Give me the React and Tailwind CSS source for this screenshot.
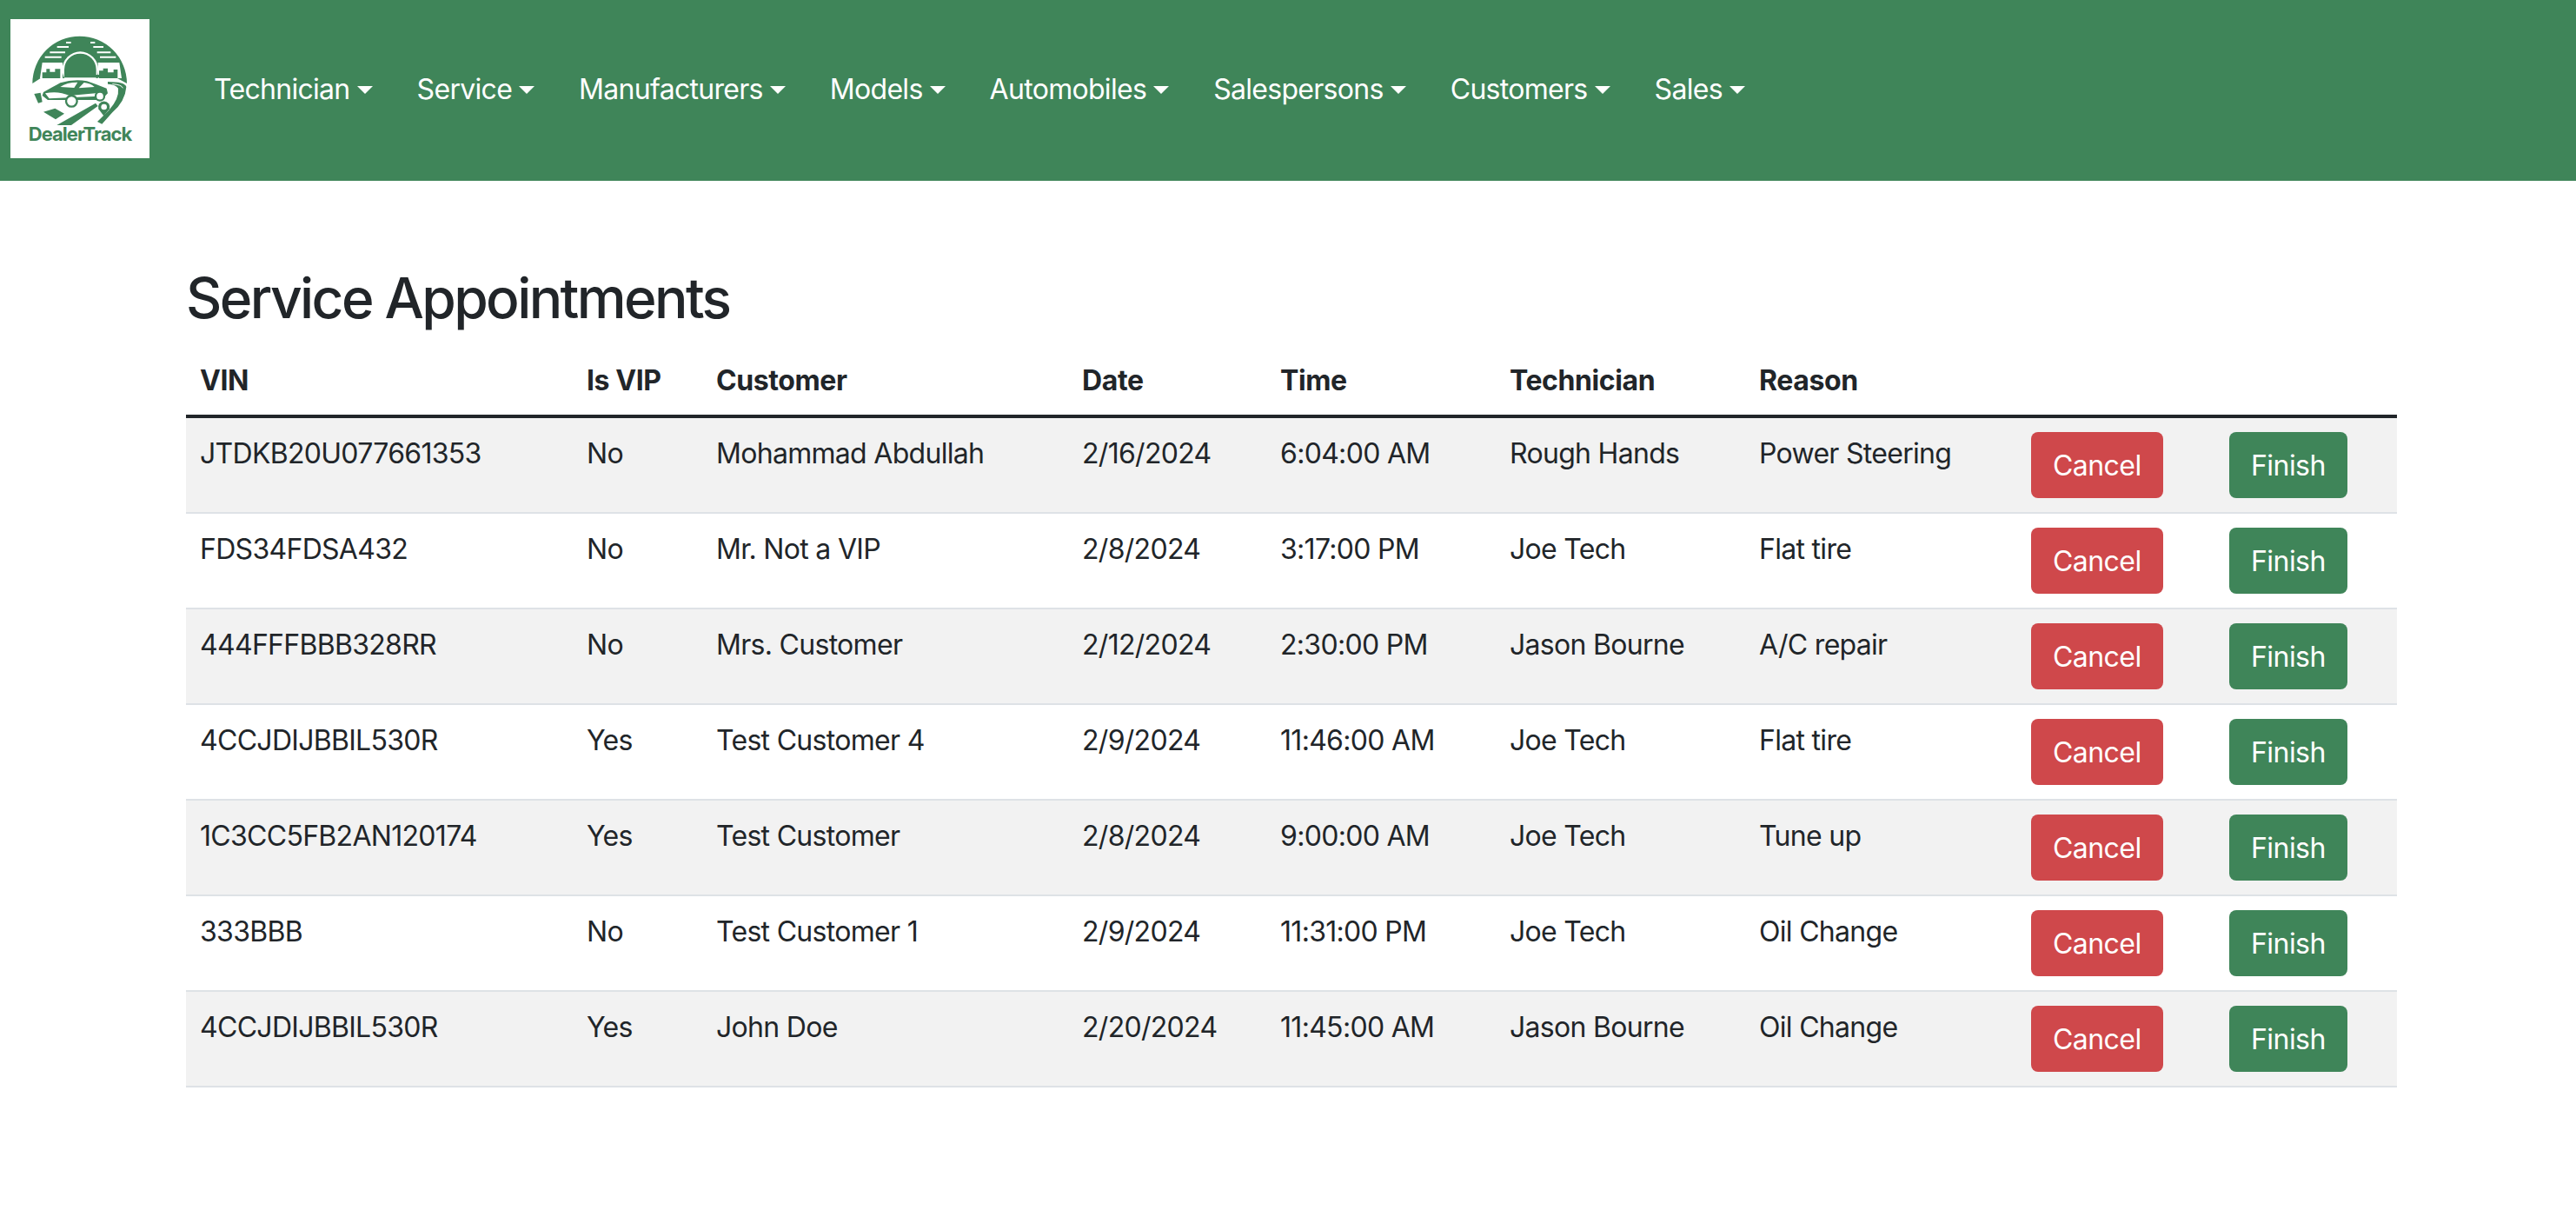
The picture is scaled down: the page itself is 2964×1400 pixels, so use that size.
const GREEN = "#3f8559";

const navItems = ["Technician", "Service", "Manufacturers", "Models", "Automobiles", "Salespersons", "Customers", "Sales"];

const appointments = [
  { vin: "JTDKB20U077661353", vip: "No", customer: "Mohammad Abdullah", date: "2/16/2024", time: "6:04:00 AM", technician: "Rough Hands", reason: "Power Steering" },
  { vin: "FDS34FDSA432", vip: "No", customer: "Mr. Not a VIP", date: "2/8/2024", time: "3:17:00 PM", technician: "Joe Tech", reason: "Flat tire" },
  { vin: "444FFFBBB328RR", vip: "No", customer: "Mrs. Customer", date: "2/12/2024", time: "2:30:00 PM", technician: "Jason Bourne", reason: "A/C repair" },
  { vin: "4CCJDIJBBIL530R", vip: "Yes", customer: "Test Customer 4", date: "2/9/2024", time: "11:46:00 AM", technician: "Joe Tech", reason: "Flat tire" },
  { vin: "1C3CC5FB2AN120174", vip: "Yes", customer: "Test Customer", date: "2/8/2024", time: "9:00:00 AM", technician: "Joe Tech", reason: "Tune up" },
  { vin: "333BBB", vip: "No", customer: "Test Customer 1", date: "2/9/2024", time: "11:31:00 PM", technician: "Joe Tech", reason: "Oil Change" },
  { vin: "4CCJDIJBBIL530R", vip: "Yes", customer: "John Doe", date: "2/20/2024", time: "11:45:00 AM", technician: "Jason Bourne", reason: "Oil Change" },
];

const headers = ["VIN", "Is VIP", "Customer", "Date", "Time", "Technician", "Reason", "", ""];

function Logo() {
  return (
    <div className="w-[160px] h-[160px] bg-white flex flex-col items-center shrink-0">
      {/* coordinates are taken from a 3x crop of the logo */}
      <svg viewBox="36 66 480 366" width="160" height="122" className="block">
        <path d="M112 288 A163 163 0 0 1 438 288 L405 270 L140 270 Z" fill={GREEN} />
        <g stroke="#fff" strokeWidth="6" fill="none">
          <path d="M228 147H245M197 162H237M172 181H225M155 197H212" />
          <path d="M312 147H328M322 162H357M335 181H382M345 197H400" />
        </g>
        <path d="M138 270 L146 216 H216 V270 Z M338 270 V216 H412 L420 270 Z" fill="#fff" />
        <circle cx="277" cy="240" r="62" fill="#fff" />
        <path d="M222 240 A55 55 0 0 1 332 240 V262 H222 Z" fill={GREEN} />
        <path d="M146 270V250H160V238H172V248H190V238H208V270Z M342 270V244H356V236H372V250H392V240H406V270Z" fill={GREEN} />
        <path d="M222 262 V268 H345 V258 H300 V250 H250 V256 H222 Z" fill={GREEN} />
        {/* car */}
        <path d="M150 318 Q190 296 208 286 Q255 272 300 280 Q335 292 368 305 L372 322 L350 345 H165 L146 330 Z" fill={GREEN} />
        <path d="M208 300 Q230 284 268 284 L256 303 Z M272 304 L290 285 Q315 288 326 300 Z" fill="#fff" />
        <path d="M156 322 Q200 312 240 330 L330 322 L350 318 L340 332 L170 340 Z" fill="#fff" />
        <circle cx="247" cy="349" r="19" fill="#fff" stroke={GREEN} strokeWidth="7" />
        <circle cx="345" cy="332" r="15" fill="#fff" stroke={GREEN} strokeWidth="7" />
        <path d="M118 324 L140 320 L146 352 L132 356 Z" fill={GREEN} />
        {/* road and pin */}
        <path d="M150 386 L190 374 L222 392 L192 412 Z M196 432 L330 356 L338 366 L246 432 Z" fill={GREEN} />
        <path d="M372 282 Q432 282 436 300 Q432 350 388 388 L352 428 L336 420 L376 380 Q412 340 408 305 Q400 292 372 290 Z" fill={GREEN} />
        <path d="M388 290 Q420 292 424 304" stroke="#fff" strokeWidth="3" fill="none" />
        <path d="M358 400 L340 376 A20 20 0 1 1 378 376 Z" fill={GREEN} />
        <circle cx="359" cy="369" r="10" fill="#fff" />
      </svg>
      <span className="text-[22px] leading-[20px] font-bold tracking-[-1px]" style={{ color: GREEN }}>DealerTrack</span>
    </div>
  );
}

function ActionButton({ color, label }) {
  return (
    <button type="button" className={`block h-[76px] px-[25px] pt-[2px] rounded-[8px] text-white text-[32px] tracking-[-0.55px] ${color}`}>
      {label}
    </button>
  );
}

export default function App() {
  return (
    <div className="min-h-[1400px] bg-white text-[#212529] text-[32px] leading-[48px] font-['Inter',sans-serif] tracking-[-0.7px]">
      <nav className="h-[208px] bg-[#3f8559] flex items-start pl-3 pt-[22px]">
        <Logo />
        <ul className="flex ml-[58px] mt-[41px] gap-[19px]">
          {navItems.map((item) => (
            <li key={item} className="flex items-center px-4 text-white h-[80px]">
              {item}
              <span className="ml-2 w-0 h-0 border-x-[9.5px] border-x-transparent border-t-[9.5px] border-t-white" />
            </li>
          ))}
        </ul>
      </nav>

      <main className="mx-[214px] pt-24">
        <h1 className="text-[64px] leading-[77px] font-medium mb-4 tracking-[-2.6px]">Service Appointments</h1>
        <table className="w-[2544px] table-fixed border-collapse">
          <colgroup>
            <col className="w-[445px]" />
            <col className="w-[149px]" />
            <col className="w-[421px]" />
            <col className="w-[228px]" />
            <col className="w-[264px]" />
            <col className="w-[287px]" />
            <col className="w-[313px]" />
            <col className="w-[228px]" />
            <col className="w-[209px]" />
          </colgroup>
          <thead>
            <tr className="border-b-4 border-[#212529]">
              {headers.map((h, i) => (
                <th key={i} className="px-4 pt-[17px] pb-[15px] text-left font-bold tracking-[-0.4px]">{h}</th>
              ))}
            </tr>
          </thead>
          <tbody>
            {appointments.map((a, i) => (
              <tr key={i} className={`border-b-2 border-[#dee2e6] ${i % 2 === 0 ? "bg-[#f2f2f2]" : "bg-white"}`}>
                <td className="px-4 pt-[17px] align-top">{a.vin}</td>
                <td className="px-4 pt-[17px] align-top">{a.vip}</td>
                <td className="px-4 pt-[17px] align-top">{a.customer}</td>
                <td className="px-4 pt-[17px] align-top">{a.date}</td>
                <td className="px-4 pt-[17px] align-top">{a.time}</td>
                <td className="px-4 pt-[17px] align-top">{a.technician}</td>
                <td className="px-4 pt-[17px] align-top">{a.reason}</td>
                <td className="p-4 align-top"><ActionButton color="bg-[#cf484b]" label="Cancel" /></td>
                <td className="p-4 align-top"><ActionButton color="bg-[#3f8559]" label="Finish" /></td>
              </tr>
            ))}
          </tbody>
        </table>
      </main>
    </div>
  );
}
